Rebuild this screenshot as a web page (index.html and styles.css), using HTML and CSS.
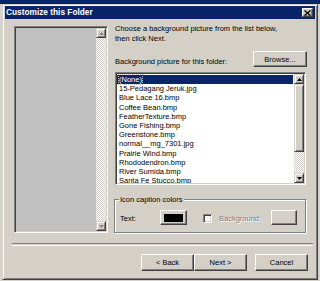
FILE: index.html
```html
<!DOCTYPE html>
<html>
<head>
<meta charset="utf-8">
<link rel="stylesheet" href="styles.css">
</head>
<body>
<div class="dialog">
  <div class="titlebar">
    <span class="title">Customize this Folder</span>
    <span class="close"><svg width="7" height="6" viewBox="0 0 7 6"><path d="M0.5 0.5 L6.5 5.5 M6.5 0.5 L0.5 5.5" stroke="#000" stroke-width="1.3" fill="none"/></svg></span>
  </div>
  <div class="main">
    <div class="preview">
      <div class="preview-area"></div>
      <div class="vscroll">
        <div class="sbtn"><svg width="5" height="3" viewBox="0 0 5 3"><path d="M2.5 0 L5 3 L0 3 Z" fill="#8a8a8a"/></svg></div>
        <div class="track"></div>
        <div class="sbtn"><svg width="5" height="3" viewBox="0 0 5 3"><path d="M0 0 L5 0 L2.5 3 Z" fill="#8a8a8a"/></svg></div>
      </div>
    </div>
    <div class="side">
      <p class="desc">Choose a background picture from the list below,<br>then click Next.</p>
      <div class="pick-row">
        <span class="pick-label">Background picture for this folder:</span>
        <span class="btn browse">Browse...</span>
      </div>
      <div class="listbox">
        <ul class="items">
          <li class="sel"><span>(None)</span></li>
          <li>15-Pedagang Jeruk.jpg</li>
          <li>Blue Lace 16.bmp</li>
          <li>Coffee Bean.bmp</li>
          <li>FeatherTexture.bmp</li>
          <li>Gone Fishing.bmp</li>
          <li>Greenstone.bmp</li>
          <li>normal__mg_7301.jpg</li>
          <li>Prairie Wind.bmp</li>
          <li>Rhododendron.bmp</li>
          <li>River Sumida.bmp</li>
          <li>Santa Fe Stucco.bmp</li>
        </ul>
        <div class="vscroll">
          <div class="sbtn"><svg width="5" height="3" viewBox="0 0 5 3"><path d="M2.5 0 L5 3 L0 3 Z" fill="#000"/></svg></div>
          <div class="track"><div class="thumb"></div></div>
          <div class="sbtn"><svg width="5" height="3" viewBox="0 0 5 3"><path d="M0 0 L5 0 L2.5 3 Z" fill="#000"/></svg></div>
        </div>
      </div>
      <div class="group">
        <span class="legend">Icon caption colors</span>
        <div class="group-row">
          <span class="text-label">Text:</span>
          <span class="btn swatch"><span class="black"></span></span>
          <span class="check"></span>
          <span class="disabled">Background:</span>
          <span class="btn swatch empty"></span>
        </div>
      </div>
    </div>
  </div>
  <div class="sep"></div>
  <div class="buttons">
    <span class="btn wiz">&lt; Back</span>
    <span class="btn wiz">Next &gt;</span>
    <span class="btn wiz cancel">Cancel</span>
  </div>
</div>
</body>
</html>
```
FILE: styles.css
```css
html, body {
  margin: 0;
  padding: 0;
}
body {
  width: 320px;
  height: 281px;
  overflow: hidden;
  background: linear-gradient(#0a246a 0 4px, #d6d3ce 4px);
  font-family: "Liberation Sans", Arial, sans-serif;
  font-size: 7.5px;
  color: #000;
}
.dialog {
  box-sizing: border-box;
  margin: 4px 0 0 2px;
  width: 316px;
  height: 276px;
  background: #d4d0c8;
  border-top: 1px solid #d4d0c8;
  border-left: 1px solid #d4d0c8;
  border-right: 1px solid #404040;
  border-bottom: 1px solid #404040;
  box-shadow: inset 1px 1px #fff, inset -1px -1px #808080;
  padding: 1px 2px 1px 2px;
  display: flex;
  flex-direction: column;
}
.titlebar {
  height: 13px;
  background: #0a246a;
  display: flex;
  align-items: center;
  justify-content: space-between;
  padding: 0 2px 0 1px;
}
.title {
  color: #fff;
  font-weight: bold;
  font-size: 8.3px;
  line-height: 13px;
}
.close {
  box-sizing: border-box;
  width: 11px;
  height: 9px;
  background: #d4d0c8;
  border-top: 1px solid #fff;
  border-left: 1px solid #fff;
  border-right: 1px solid #404040;
  border-bottom: 1px solid #404040;
  box-shadow: inset -1px -1px #808080;
  display: flex;
  align-items: center;
  justify-content: center;
}
.close svg { display: block; }
.main {
  display: flex;
  padding: 7px 0 0 9px;
  gap: 7px;
}
.preview {
  box-sizing: border-box;
  width: 94px;
  height: 207px;
  border-top: 1px solid #808080;
  border-left: 1px solid #808080;
  border-right: 1px solid #fff;
  border-bottom: 1px solid #fff;
  box-shadow: inset 1px 1px #404040, inset -1px -1px #d4d0c8;
  padding: 1px;
  display: flex;
}
.preview-area {
  flex: 1;
  background: #c0c0c0;
}
.vscroll {
  width: 10px;
  display: flex;
  flex-direction: column;
}
.track {
  flex: 1;
  background: repeating-conic-gradient(#ffffff 0 25%, #d4d0c8 0 50%) 0 0 / 2px 2px;
}
.sbtn, .thumb {
  box-sizing: border-box;
  background: #d4d0c8;
  border-top: 1px solid #d4d0c8;
  border-left: 1px solid #d4d0c8;
  border-right: 1px solid #404040;
  border-bottom: 1px solid #404040;
  box-shadow: inset 1px 1px #fff, inset -1px -1px #808080;
}
.sbtn {
  height: 10px;
  display: flex;
  align-items: center;
  justify-content: center;
}
.sbtn svg { display: block; }
.thumb {
  height: 68px;
}
.side {
  width: 192px;
  display: flex;
  flex-direction: column;
}
.desc {
  margin: -2px 0 0 0;
  line-height: 10px;
}
.pick-row {
  margin-top: 7px;
  height: 16px;
  display: flex;
  align-items: flex-end;
  justify-content: space-between;
}
.pick-label {
  line-height: 10px;
}
.btn {
  box-sizing: border-box;
  background: #d4d0c8;
  border-top: 1px solid #fff;
  border-left: 1px solid #fff;
  border-right: 1px solid #404040;
  border-bottom: 1px solid #404040;
  box-shadow: inset -1px -1px #808080;
  display: flex;
  align-items: center;
  justify-content: center;
}
.browse {
  width: 54px;
  height: 16px;
}
.listbox {
  box-sizing: border-box;
  margin-top: 5px;
  width: 191px;
  height: 113px;
  border-top: 1px solid #808080;
  border-left: 1px solid #808080;
  border-right: 1px solid #fff;
  border-bottom: 1px solid #fff;
  box-shadow: inset 1px 1px #404040, inset -1px -1px #d4d0c8;
  padding: 1px;
  background: #fff;
  display: flex;
}
.items {
  flex: 1;
  list-style: none;
  margin: 0;
  padding: 1px 0 0 0;
  background: #fff;
  overflow: hidden;
}
.items li {
  height: 9.2px;
  line-height: 9.2px;
  padding-left: 2px;
  white-space: nowrap;
}
.items li.sel {
  background: #0a246a;
  color: #fff;
  margin-right: 1px;
}
.items li.sel span {
  outline: 1px dotted #c0c0c0;
}
.group {
  box-sizing: border-box;
  margin: 14px 0 0 -1px;
  width: 192px;
  height: 34px;
  border: 1px solid #808080;
  box-shadow: inset 1px 1px #fff, 1px 1px #fff;
  padding: 0 0 0 5px;
  display: flex;
  flex-direction: column;
}
.legend {
  align-self: flex-start;
  margin-top: -5px;
  margin-left: -1px;
  padding: 0 1px;
  background: #d4d0c8;
  line-height: 9px;
}
.group-row {
  margin-top: 6px;
  display: flex;
  align-items: center;
}
.text-label {
  width: 40px;
  padding-top: 1px;
}
.swatch {
  width: 27px;
  height: 15px;
}
.swatch.empty {
  width: 26px;
}
.black {
  display: block;
  width: 19px;
  height: 8px;
  background: #000;
}
.check {
  box-sizing: border-box;
  margin: 2px 0 0 16px;
  width: 9px;
  height: 9px;
  background: #fff;
  border-top: 1px solid #808080;
  border-left: 1px solid #808080;
  border-right: 1px solid #fff;
  border-bottom: 1px solid #fff;
  box-shadow: inset 1px 1px #404040, inset -1px -1px #d4d0c8;
}
.disabled {
  margin-left: 7px;
  padding-top: 1px;
  width: 52px;
  color: #808080;
  text-shadow: 1px 1px #fff;
}
.sep {
  margin: 10px 2px 0 7px;
  height: 1px;
  border-top: 1px solid #808080;
  border-bottom: 1px solid #fff;
}
.buttons {
  margin-top: 8px;
  display: flex;
  justify-content: flex-end;
  padding-right: 7px;
}
.wiz {
  width: 53px;
  height: 17px;
}
.cancel {
  margin-left: 8px;
}
```
